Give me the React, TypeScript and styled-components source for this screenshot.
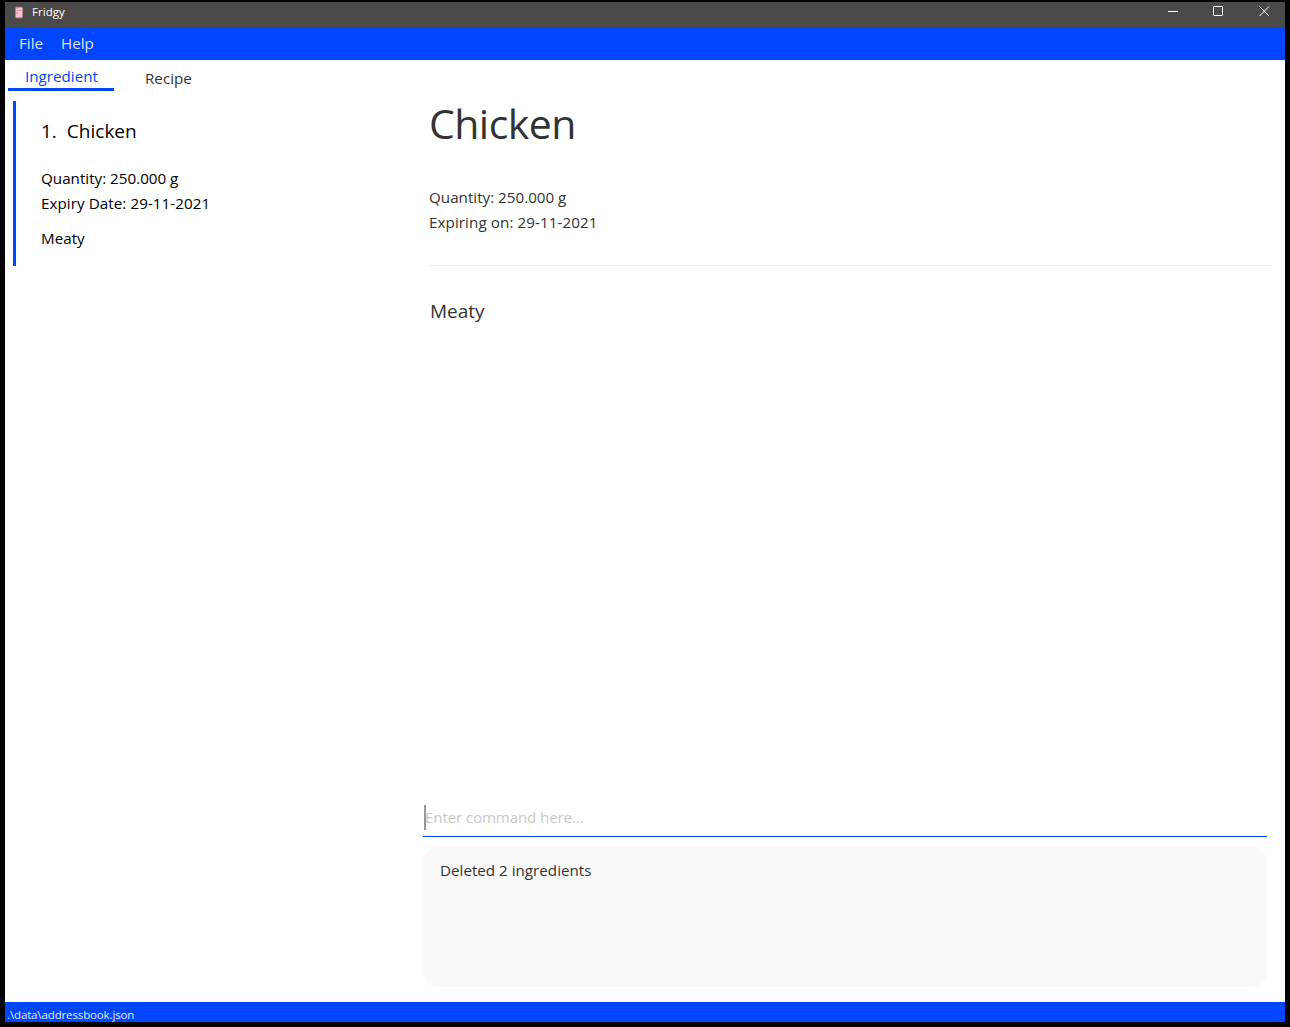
import React from "react";
import styled, { createGlobalStyle } from "styled-components";

const BLUE = "#0045ff";

const GlobalStyle = createGlobalStyle`
  * { box-sizing: border-box; }
  body { margin: 0; background: #000; }
`;

const Label = styled.div<{ $size?: number; $track?: number; $line?: number }>`
  font-size: ${(p) => p.$size ?? 15.2}px;
  letter-spacing: ${(p) => p.$track ?? 0}px;
  line-height: ${(p) => p.$line ?? 25}px;
  white-space: pre;
`;

const Window = styled.div`
  display: flex;
  flex-direction: column;
  width: 1290px;
  height: 1027px;
  padding: 2px 5px 5px;
  background: #000;
  color: #333;
  font-family: "Open Sans", "Noto Sans", sans-serif;
`;

const TitleBar = styled.header`
  display: flex;
  align-items: flex-start;
  height: 25px;
  padding-left: 10px;
  background: #4c4a48;
  color: #fff;
`;

const AppIcon = styled.svg`
  margin: 4px 8px 0 0;
`;

const Controls = styled.div`
  display: flex;
  margin-left: auto;
  gap: 34px;
  padding: 4px 15px 0 0;
`;

const MenuBar = styled.nav`
  display: flex;
  gap: 18px;
  height: 33px;
  padding: 4px 14px;
  background: ${BLUE};
  color: #d9e3ff;
`;

const Content = styled.main`
  display: flex;
  flex: 1;
  background: #fff;
`;

const Sidebar = styled.aside`
  width: 418px;
  padding-left: 3px;
`;

const Tabs = styled.div`
  display: flex;
  height: 31px;
`;

const Tab = styled.div<{ $active?: boolean }>`
  width: 106px;
  height: 31px;
  padding: ${(p) => (p.$active ? "4px 0 0 17px" : "6px 0 0 31px")};
  color: ${(p) => (p.$active ? BLUE : "#333")};
  border-bottom: 3px solid ${(p) => (p.$active ? BLUE : "transparent")};
`;

const IngredientCard = styled.section`
  height: 165px;
  margin: 10px 0 0 5px;
  padding: 15px 0 0 25px;
  border-left: 3px solid ${BLUE};
  color: #000;
`;

const CardTitle = styled.div`
  display: flex;
  gap: 10px;
  margin-bottom: 20px;
`;

const CardTag = styled.div`
  margin-top: 10px;
`;

const Main = styled.div`
  display: flex;
  flex: 1;
  flex-direction: column;
  padding: 36px 18px 15px 0;
`;

const Details = styled.section`
  flex: 1;
  margin-right: -4px;
  padding-left: 5px;
`;

const Heading = styled.div`
  padding-left: 1px;
`;

const Facts = styled.div`
  padding: 34px 0 30px 1px;
`;

const Divider = styled.hr`
  height: 1px;
  margin: 0;
  border: 0;
  background: #e8edfc;
`;

const Tag = styled.div`
  padding: 31px 0 0 2px;
`;

const CommandBox = styled.div`
  display: flex;
  align-items: flex-start;
  height: 32px;
  padding-left: 1px;
  border-bottom: 1px solid ${BLUE};
  color: #c8c8c8;
`;

const Caret = styled.span`
  width: 2px;
  height: 25px;
  margin-right: -1px;
  background: #999;
`;

const Result = styled.section`
  height: 140px;
  margin-top: 10px;
  padding: 11px 17px;
  border-radius: 15px;
  background: #f9f9f9;
`;

const StatusBar = styled.footer`
  height: 20px;
  padding: 3px 2px 0;
  background: ${BLUE};
  color: #e3ebff;
`;

export default function App() {
  return (
    <Window>
      <GlobalStyle />
      <TitleBar>
        <AppIcon width="9" height="13" viewBox="0 0 9 13">
          <rect x="0.5" y="1" width="7" height="11" rx="1" fill="#ffc0cb" />
          <path d="M0.5 4.5h7" stroke="#d99aa8" />
          <path d="M1 1h6M1 12h6" stroke="#806a70" />
          <path d="M2 2v1M2 6v2" stroke="#b98490" />
        </AppIcon>
        <Label $size={11.5} $line={20} $track={0.05}>Fridgy</Label>
        <Controls>
          <svg width="11" height="11" viewBox="0 0 11 11"><path d="M0 5.5h10" stroke="#fff" /></svg>
          <svg width="11" height="11" viewBox="0 0 11 11"><rect x="0.5" y="0.5" width="9" height="9" rx="0.5" fill="none" stroke="#fff" /></svg>
          <svg width="12" height="11" viewBox="0 0 12 11"><path d="M1.5 0.5l9.5 9.5M11 0.5L1.5 10" stroke="#fff" /></svg>
        </Controls>
      </TitleBar>
      <MenuBar>
        <Label>File</Label>
        <Label>Help</Label>
      </MenuBar>
      <Content>
        <Sidebar>
          <Tabs>
            <Tab $active><Label>Ingredient</Label></Tab>
            <Tab><Label>Recipe</Label></Tab>
          </Tabs>
          <IngredientCard>
            <CardTitle>
              <Label $size={19} $line={30}>1.</Label>
              <Label $size={19} $line={30}>Chicken</Label>
            </CardTitle>
            <Label>Quantity: 250.000 g</Label>
            <Label $track={0.06}>Expiry Date: 29-11-2021</Label>
            <CardTag><Label>Meaty</Label></CardTag>
          </IngredientCard>
        </Sidebar>
        <Main>
          <Details>
            <Heading><Label $size={41} $line={55} $track={-0.55}>Chicken</Label></Heading>
            <Facts>
              <Label>Quantity: 250.000 g</Label>
              <Label $track={0.08}>Expiring on: 29-11-2021</Label>
            </Facts>
            <Divider />
            <Tag><Label $size={19} $line={28}>Meaty</Label></Tag>
          </Details>
          <CommandBox>
            <Caret />
            <Label $track={-0.17}>Enter command here...</Label>
          </CommandBox>
          <Result><Label>Deleted 2 ingredients</Label></Result>
        </Main>
      </Content>
      <StatusBar>
        <Label $size={11.5} $line={20} $track={-0.13}>.\data\addressbook.json</Label>
      </StatusBar>
    </Window>
  );
}
